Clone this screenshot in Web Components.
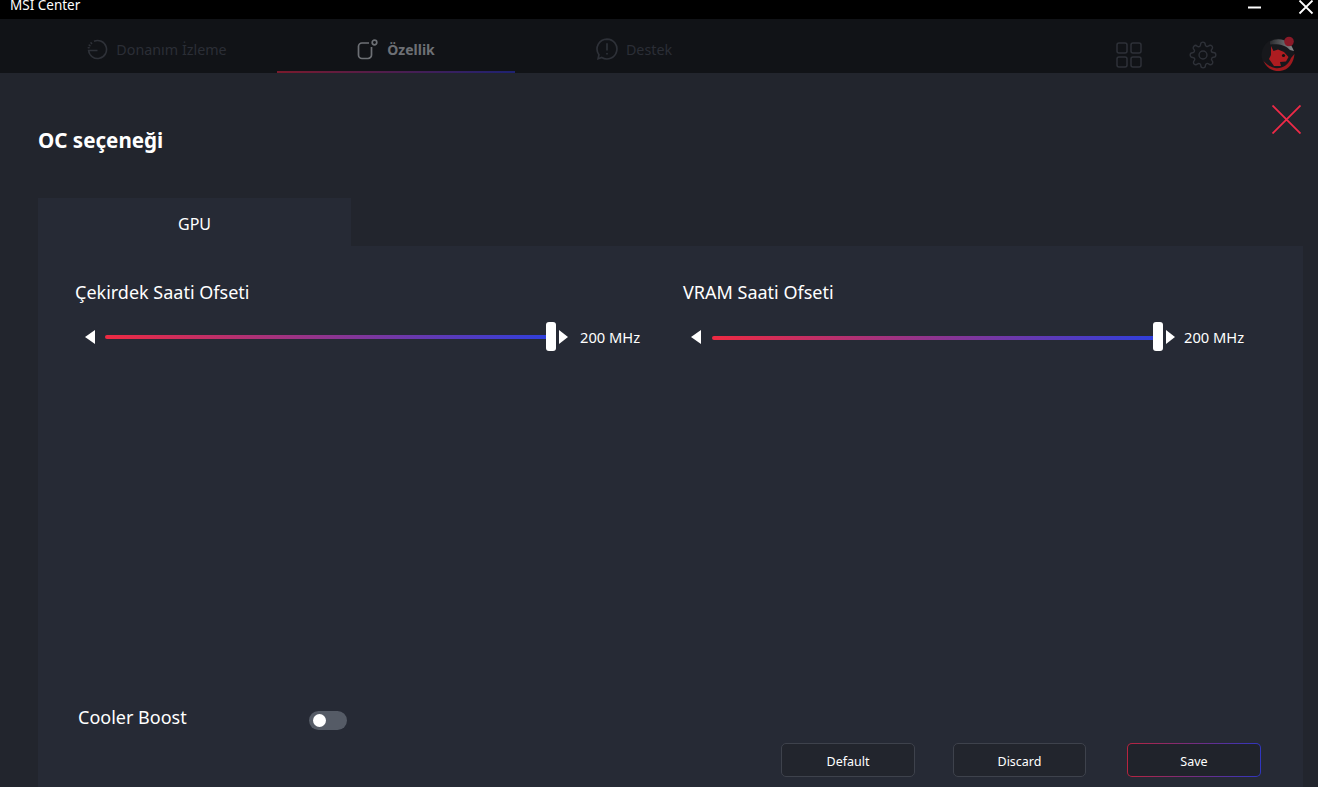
<!DOCTYPE html>
<html lang="tr">
<head>
<meta charset="utf-8">
<title>MSI Center</title>
<style>
    html, body { margin: 0; height: 100%; background: #22252d; overflow: hidden; }
    body { font-family: "Noto Sans", "Open Sans", sans-serif; color: #fff; }
</style>
</head>
<body>
<msi-app>
    <msi-titlebar slot="top">MSI Center</msi-titlebar>
    <msi-nav slot="top"></msi-nav>
    <oc-page></oc-page>
</msi-app>

<script>
class MsiApp extends HTMLElement {
    constructor() {
        super();
        this.shadowDom = this.attachShadow({ mode: 'open' });
    }

    connectedCallback() {
        this.shadowDom.innerHTML = `
            <style>
                :host { display: flex; flex-direction: column; width: 1318px; height: 787px; overflow: hidden; }
            </style>
            <slot name="top"></slot>
            <slot></slot>
        `
    }
}

class MsiTitlebar extends HTMLElement {
    constructor() {
        super();
        this.shadowDom = this.attachShadow({ mode: 'open' });
    }

    connectedCallback() {
        this.shadowDom.innerHTML = `
            <style>
                :host { display: flex; justify-content: space-between; height: 19px; background: #000; overflow: hidden; flex: none; }
                .name { font-size: 13.5px; line-height: 10px; padding-left: 10px; color: #fff; }
                .controls { display: flex; }
                svg { display: block; }
            </style>
            <div class="name"><slot></slot></div>
            <div class="controls">
                <svg width="70" height="19" viewBox="0 0 70 19">
                    <path d="M0 7.5H13" stroke="#fff" stroke-width="2" fill="none"/>
                    <path d="M51.500 0.500L64.500 13.500M64.500 0.500L51.500 13.500" stroke="#fff" stroke-width="1.800" fill="none"/>
                </svg>
            </div>
        `
    }
}

class NavItem extends HTMLElement {
    constructor() {
        super();
        this.shadowDom = this.attachShadow({ mode: 'open' });
    }

    connectedCallback() {
        this.shadowDom.innerHTML = `
            <style>
                :host { display: flex; align-items: center; justify-content: center; gap: 8px; width: 238px; height: 54px; position: relative;
                        font-size: 14.3px; color: #2b2e36; box-sizing: border-box; padding-top: 6px; }
                :host(:first-child) { padding-right: 2px; }
                :host([active]) { color: #6d7075; font-weight: 700; gap: 9px; font-size: 14px; }
                :host([active])::after { content: ""; position: absolute; left: 0; right: 0; bottom: 0; height: 2px;
                        background: linear-gradient(90deg, #7a1a2c, #1e2272); }
                ::slotted(svg) { display: block; flex: none; }
            </style>
            <slot name="icon"></slot>
            <span><slot></slot></span>
        `
    }
}

class MsiNav extends HTMLElement {
    constructor() {
        super();
        this.shadowDom = this.attachShadow({ mode: 'open' });
    }

    connectedCallback() {
        this.shadowDom.innerHTML = `
            <style>
                :host { display: flex; align-items: center; height: 54px; background: #111317; padding-left: 39px; flex: none; }
                .tabs { display: flex; }
                .tools { display: flex; align-items: center; margin-left: auto; padding: 18px 23px 0 0; }
                .tools svg { display: block; }
                .grid { margin-right: 47px; }
                .gear { margin-right: 44px; }
                .avatar { margin-top: -2px; }
            </style>
            <div class="tabs">
                <nav-item>
                    <svg slot="icon" width="21" height="21" viewBox="0 0 21 21" fill="none" stroke="#2e3138" stroke-width="1.6">
                        <path d="M7 2.2A9 9 0 1 1 1.6 11.5H10.5"/>
                        <path d="M4 3.8L4.6 4.5M2.2 6.2L2.9 6.7M1.3 8.7H2.1" stroke-linecap="round"/>
                    </svg>
                    Donanım İzleme
                </nav-item>
                <nav-item active>
                    <svg slot="icon" width="21" height="21" viewBox="0 0 21 21" fill="none" stroke="#6d7075" stroke-width="1.7">
                        <path d="M12 4H5A3.5 3.5 0 0 0 1.5 7.5V16A3.5 3.5 0 0 0 5 19.5H11A3.5 3.5 0 0 0 14.500 16V8"/>
                        <circle cx="17.500" cy="3.500" r="2.300"/>
                    </svg>
                    Özellik
                </nav-item>
                <nav-item>
                    <svg slot="icon" width="22" height="22" viewBox="0 0 21 21" fill="none" stroke="#2e3138" stroke-width="1.6">
                        <path d="M10.500 1A9.500 9.500 0 1 1 5.500 18.600L2 19.800L2.800 16A9.500 9.500 0 0 1 10.500 1Z"/>
                        <path d="M10.500 5V12M10.500 14.200V15.800"/>
                    </svg>
                    Destek
                </nav-item>
            </div>
            <div class="tools">
                <svg class="grid" width="26" height="26" viewBox="0 0 26 26" fill="none" stroke="#2e3138" stroke-width="1.500">
                    <rect x="1" y="1" width="10" height="10" rx="2"/>
                    <rect x="15" y="1" width="10" height="10" rx="2"/>
                    <rect x="1" y="15" width="10" height="10" rx="2"/>
                    <rect x="15" y="15" width="10" height="10" rx="2"/>
                </svg>
                <svg class="gear" width="28" height="28" viewBox="0 0 24 24" fill="none" stroke="#2e3138" stroke-width="1.200" stroke-linejoin="round">
                    <circle cx="12" cy="12" r="3.400"/>
                    <path d="M19.400 15a1.650 1.650 0 0 0 .33 1.820l.06.06a2 2 0 1 1-2.830 2.830l-.06-.06a1.650 1.650 0 0 0-2.800 1.170V21a2 2 0 1 1-4 0v-.09A1.650 1.650 0 0 0 7.300 19.740l-.06.06a2 2 0 1 1-2.830-2.830l.06-.06A1.650 1.650 0 0 0 3.300 14.100H3a2 2 0 1 1 0-4h.09A1.650 1.650 0 0 0 4.260 7.300l-.06-.06a2 2 0 1 1 2.830-2.830l.06.06A1.650 1.650 0 0 0 9.900 3.300V3a2 2 0 1 1 4 0v.09a1.650 1.650 0 0 0 2.800 1.170l.06-.06a2 2 0 1 1 2.830 2.830l-.06.06A1.650 1.650 0 0 0 20.700 9.900H21a2 2 0 1 1 0 4h-.09a1.650 1.650 0 0 0-1.510 1.100Z"/>
                </svg>
                <svg class="avatar" width="34" height="36" viewBox="0 0 34 36">
                    <defs>
                        <linearGradient id="cap" x1="0" x2="1">
                            <stop offset="0" stop-color="#2a2b2f"/>
                            <stop offset="1" stop-color="#8b8c8e"/>
                        </linearGradient>
                    </defs>
                    <circle cx="17" cy="19" r="16.500" fill="#17181c"/>
                    <path d="M9 5.500A16.500 16.500 0 0 1 30 9L33 15L29 14C25 9.500 18 7.500 9 8.500Z" fill="url(#cap)"/>
                    <path d="M2.500 25C6 33 13 35.500 19 35C28 34 32.500 27 33.500 18L30 22C27 30 20 33 14 32C9 31 5.500 28 2.500 25Z" fill="#a01a1e"/>
                    <path d="M10 10L12.500 15L17 13.500L23 16L27.500 21L25 25.500L19 26L20 30L13 30L9.500 25L8 23L10 19Z" fill="#ad1c20"/>
                    <circle cx="22.500" cy="19.500" r="1.600" fill="#111"/>
                    <circle cx="28" cy="5.500" r="4.800" fill="#8a1a28"/>
                </svg>
            </div>
        `
    }
}

class OcSlider extends HTMLElement {
    constructor() {
        super();
        this.shadowDom = this.attachShadow({ mode: 'open' });
    }

    connectedCallback() {
        this.shadowDom.innerHTML = `
            <style>
                :host { display: block; --inset: 10px; --track-gap: 10px; --value-gap: 12px; --track-drop: 0px; }
                :host([second]) { --inset: 8px; --track-gap: 11px; --value-gap: 9px; --track-drop: 2px; }
                .label { font-size: 18px; line-height: 24px; height: 24px; color: #fff; }
                .row { display: flex; align-items: center; height: 30px; margin-top: 18px; padding-left: var(--inset); }
                .arrow { width: 0; height: 0; border-style: solid; border-width: 7.500px 0; border-color: transparent; flex: none; }
                .left { border-right: 10px solid #fff; }
                .right { border-left: 9px solid #fff; margin-left: 11px; }
                .track { position: relative; width: 443px; height: 4px; margin: var(--track-drop) 0 0 var(--track-gap); border-radius: 2px;
                         background: linear-gradient(90deg, #ee2a42, #2f3fdc); flex: none; }
                .thumb { position: absolute; right: -8px; top: calc(-13px - var(--track-drop) / 2); width: 10px; height: 29px; background: #fff; border-radius: 3px; }
                .value { font-size: 14.7px; margin-left: var(--value-gap); white-space: nowrap; color: #fff; }
            </style>
            <div class="label">${this.getAttribute('label')}</div>
            <div class="row">
                <div class="arrow left"></div>
                <div class="track"><div class="thumb"></div></div>
                <div class="arrow right"></div>
                <div class="value">${this.getAttribute('value')}</div>
            </div>
        `
    }
}

class MsiToggle extends HTMLElement {
    constructor() {
        super();
        this.shadowDom = this.attachShadow({ mode: 'open' });
    }

    connectedCallback() {
        this.shadowDom.innerHTML = `
            <style>
                :host { display: flex; align-items: center; box-sizing: border-box; width: 38px; height: 19px; padding-left: 4px;
                        background: #555b66; border-radius: 10px; flex: none; }
                .knob { width: 13px; height: 13px; border-radius: 50%; background: #fff; }
            </style>
            <div class="knob"></div>
        `
    }
}

class MsiButton extends HTMLElement {
    constructor() {
        super();
        this.shadowDom = this.attachShadow({ mode: 'open' });
    }

    connectedCallback() {
        this.shadowDom.innerHTML = `
            <style>
                :host { display: flex; align-items: center; justify-content: center; box-sizing: border-box; width: 134px; height: 34px; padding-top: 2px;
                        font-size: 12.500px; color: #fff; border: 1px solid #3e424c; border-radius: 5px; background: #22252d; flex: none; }
                :host([primary]) { border-color: transparent;
                        background: linear-gradient(#20232b, #20232b) padding-box, linear-gradient(90deg, #b8243f, #3036c0) border-box; }
            </style>
            <slot></slot>
        `
    }
}

class OcPage extends HTMLElement {
    constructor() {
        super();
        this.shadowDom = this.attachShadow({ mode: 'open' });
    }

    connectedCallback() {
        this.shadowDom.innerHTML = `
            <style>
                :host { display: block; flex: 1; padding-left: 38px; padding-right: 15px; background: #22252d; min-height: 0; }
                header { display: flex; justify-content: space-between; height: 125px; }
                h1 { margin: 50px 0 0; font-size: 20.6px; line-height: 34px; font-weight: 700; color: #fff; }
                .close { display: block; margin-top: 32px; margin-right: 2px; }
                .tab { display: flex; align-items: center; justify-content: center; width: 313px; height: 48px; background: #262a35;
                       font-size: 16px; color: #fff; box-sizing: border-box; padding-top: 3px; }
                .panel { background: #262a35; height: 541px; box-sizing: border-box; padding: 34px 42px 0 37px; display: flex; flex-direction: column; }
                .sliders { display: grid; grid-template-columns: 608px 1fr; }
                .boost { display: flex; align-items: center; margin-top: 352px; padding-left: 3px; font-size: 18px; height: 24px; }
                .boost span { width: 231px; margin-top: 2px; }
                .boost msi-toggle { margin-top: 9px; }
                .actions { display: flex; justify-content: flex-end; margin-top: 15px; }
                .actions msi-button:nth-child(2) { width: 133px; margin: 0 41px 0 38px; }
            </style>
            <header>
                <h1>OC seçeneği</h1>
                <svg class="close" width="29" height="29" viewBox="0 0 29 29" fill="none" stroke="#ef2a48" stroke-width="1.800">
                    <path d="M0.500 0.500L28.500 28.500M28.500 0.500L0.500 28.500"/>
                </svg>
            </header>
            <div class="tab">GPU</div>
            <div class="panel">
                <div class="sliders">
                    <oc-slider label="Çekirdek Saati Ofseti" value="200 MHz"></oc-slider>
                    <oc-slider second label="VRAM Saati Ofseti" value="200 MHz"></oc-slider>
                </div>
                <div class="boost">
                    <span>Cooler Boost</span>
                    <msi-toggle></msi-toggle>
                </div>
                <div class="actions">
                    <msi-button>Default</msi-button>
                    <msi-button>Discard</msi-button>
                    <msi-button primary>Save</msi-button>
                </div>
            </div>
        `
    }
}

customElements.define('msi-app', MsiApp);
customElements.define('msi-titlebar', MsiTitlebar);
customElements.define('nav-item', NavItem);
customElements.define('msi-nav', MsiNav);
customElements.define('oc-slider', OcSlider);
customElements.define('msi-toggle', MsiToggle);
customElements.define('msi-button', MsiButton);
customElements.define('oc-page', OcPage);
</script>
</body>
</html>
